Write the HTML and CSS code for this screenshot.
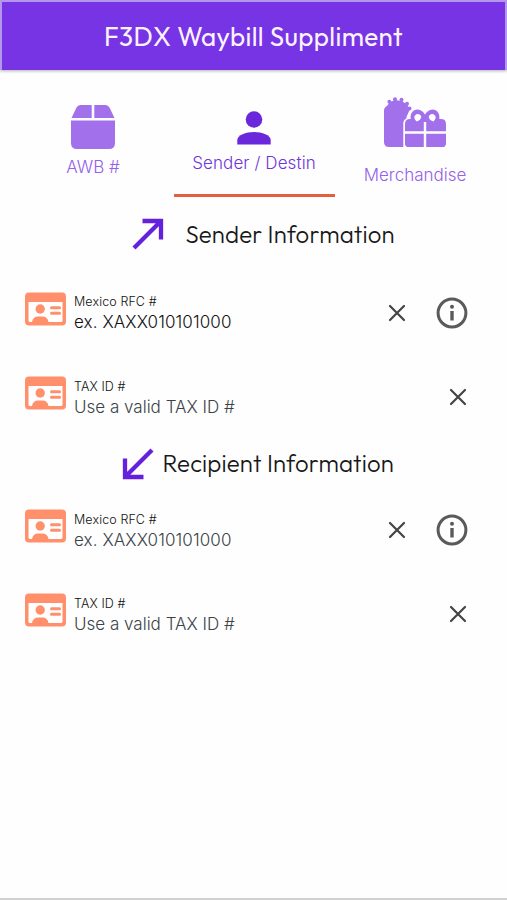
FILE: index.html
```html
<!DOCTYPE html>
<html lang="en">
<head>
<meta charset="utf-8">
<title>F3DX Waybill Suppliment</title>
<link rel="stylesheet" href="styles.css">
</head>
<body>
<svg class="defs" width="0" height="0">
  <symbol id="id-card" viewBox="0 0 42 34">
    <rect x="0.5" y="0.5" width="41" height="33" rx="4" fill="#ff906b"/>
    <path d="M4 10h34v18.500q0 1.500-1.500 1.500H24q-1-5.500-6-5.500h-4.500q-5 0-6 5.500H5.500Q4 30 4 28.500z" fill="#fff"/>
    <circle cx="15.700" cy="17" r="4.700" fill="#ff906b"/>
    <path d="M27 15.700h8M27 21.300h8" stroke="#ff906b" stroke-width="3" stroke-linecap="round"/>
  </symbol>
  <symbol id="close" viewBox="0 0 18 18">
    <path d="M2 2l14 14M16 2L2 16" stroke="#444" stroke-width="2.200" stroke-linecap="round"/>
  </symbol>
  <symbol id="info" viewBox="0 0 32 32">
    <circle cx="16" cy="16" r="13.900" fill="none" stroke="#5a5a5a" stroke-width="3"/>
    <path d="M16 14v9.500" stroke="#5a5a5a" stroke-width="3.400"/>
    <circle cx="16" cy="9.700" r="2" fill="#5a5a5a"/>
  </symbol>
</svg>
<main class="screen">
  <header class="bar"><h1>F3DX Waybill Suppliment</h1></header>
  <nav class="tabs">
    <a class="tab tab-awb">
      <svg width="44" height="44" viewBox="0 0 44 44" fill="#a370ec"><path d="M5.500 2.500Q6.700 0 9.500 0H20.700v13H0.500zM23.300 0h11.200q2.800 0 4 2.500L43.500 13H23.300zM0 15.500h44V38q0 6-6 6H6q-6 0-6-6z"/></svg>
      <span>AWB #</span>
    </a>
    <a class="tab tab-sender active">
      <svg width="34" height="34" viewBox="0 0 34 34" fill="#6a27db"><circle cx="17" cy="8.500" r="8.300"/><path d="M.3 33.500V29C.3 24 9 21 17 21s16.700 3 16.700 8v4.500z"/></svg>
      <span>Sender / Destin</span>
    </a>
    <a class="tab tab-merch">
      <svg width="64" height="52" viewBox="0 0 64 52" fill="#a370ec">
        <path d="M1 13.500Q1 10.500 4 9L7 5l5-2 7 1 5.500 4 2 5-3 7v30H6q-5 0-5-5z"/>
        <circle cx="6.400" cy="4.700" r="2"/><circle cx="12" cy="2.300" r="2"/><circle cx="18.500" cy="2.700" r="2"/><circle cx="24" cy="6.700" r="2"/><circle cx="26.500" cy="11.500" r="2"/>
        <path d="M20.300 52V26q0-4.500 6-5.200C26 14 32.500 9 38.500 12.500L42 16l3-3C51 9 57.500 13 58 20.800q6 1 6 6V52z" fill="#fff"/>
        <path d="M27 22h.7C26.500 15.500 32 10.500 37.500 13.300q3 1.500 4.500 4.200 1.500-2.700 4.500-4.200C52 10.500 57.500 15.500 56.300 22H58q5 0 5 5V50H22V27q0-5 5-5z"/>
        <path d="M32 22.500a3.500 3.500 0 1 1 6.300-2.500Q37.500 23.500 33.500 24.500zM52 22.500a3.500 3.500 0 1 0-6.300-2.500Q46.500 23.500 50.500 24.500z" fill="#fff"/>
        <path d="M42 25v26M21.500 35.500h42" stroke="#fff" stroke-width="2.400"/>
        <path d="M21 51v-6q1 5.500 6 5.500zM63.500 51v-6q-.5 5.500-5 5.500z" fill="#fff"/>
      </svg>
      <span>Merchandise</span>
    </a>
  </nav>

  <h2 class="section section-sender">
    <svg width="32" height="32" viewBox="0 0 32 32" fill="none" stroke="#6420dc" stroke-width="4.300"><path d="M10.500 3H29v18.500M28.500 3.500L2 30"/></svg>
    <span>Sender Information</span>
  </h2>
  <div class="row">
    <svg class="card"><use href="#id-card"/></svg>
    <div class="field"><label class="label rfc">Mexico RFC #</label><span class="value rfc-value filled">ex. XAXX010101000</span></div>
    <svg class="close"><use href="#close"/></svg>
    <svg class="info"><use href="#info"/></svg>
  </div>
  <div class="row lower">
    <svg class="card"><use href="#id-card"/></svg>
    <div class="field"><label class="label tax">TAX ID #</label><span class="value tax-value">Use a valid TAX ID #</span></div>
    <svg class="close last"><use href="#close"/></svg>
  </div>

  <h2 class="section section-recipient">
    <svg width="32" height="32" viewBox="0 0 32 32" fill="none" stroke="#6420dc" stroke-width="4.300"><path d="M21.500 29H3V10.500M3.500 28.500L30 2"/></svg>
    <span>Recipient Information</span>
  </h2>
  <div class="row lower">
    <svg class="card"><use href="#id-card"/></svg>
    <div class="field"><label class="label rfc">Mexico RFC #</label><span class="value rfc-value">ex. XAXX010101000</span></div>
    <svg class="close"><use href="#close"/></svg>
    <svg class="info"><use href="#info"/></svg>
  </div>
  <div class="row lower">
    <svg class="card"><use href="#id-card"/></svg>
    <div class="field"><label class="label tax">TAX ID #</label><span class="value tax-value">Use a valid TAX ID #</span></div>
    <svg class="close last"><use href="#close"/></svg>
  </div>
</main>
</body>
</html>
```
FILE: styles.css
```css
* { box-sizing: border-box; }
body { margin: 0; background: #fefefe; font-family: Inter, "Liberation Sans", sans-serif; font-weight: 300; }
.defs { display: block; }
.screen { height: 900px; border-bottom: 2px solid #d0d0d0; overflow: hidden; }
svg { flex: none; display: block; }

.bar {
  height: 70px;
  padding-top: 2px;
  border: 2px solid #b596ed;
  border-bottom: 0;
  background: #7734e4;
  box-shadow: 0 1px 3px rgba(0, 0, 0, .3);
  display: flex;
  align-items: center;
  justify-content: center;
}
.bar h1 { margin: 0; font: 400 26px/32px Outfit, Lato, sans-serif; letter-spacing: .37px; color: #fbf3ff; white-space: nowrap; }

.tabs { height: 127px; padding: 0 12.500px; display: grid; grid-template-columns: repeat(3, 161px); }
.tab { display: flex; flex-direction: column; align-items: center; color: #9560ea; font-size: 17px; line-height: 20px; white-space: nowrap; }
.tab-awb { padding-top: 35px; gap: 8px; }
.tab-sender { padding-top: 41px; gap: 8px; border-bottom: 3px solid #e65f3c; color: #6f34dc; }
.tab-merch { padding-top: 27px; gap: 16px; }
.tab-sender span { letter-spacing: .1px; }

.section { margin: 0; display: flex; align-items: center; font: 300 24px/30px Outfit, Lato, sans-serif; letter-spacing: .14px; color: #181818; white-space: nowrap; }
.section-sender { height: 74px; padding-left: 132px; gap: 21.500px; }
.section-recipient { height: 49px; padding-left: 122px; gap: 8.500px; }
.section-recipient span { margin-top: -2px; }

.row { height: 84px; padding: 0 39px 0 24px; display: flex; align-items: center; }
.card { width: 43px; height: 34px; margin-bottom: 9px; }
.field { flex: 1; margin-left: 7px; display: flex; flex-direction: column; white-space: nowrap; }
.lower .field { padding-top: 2px; }
.label { font-size: 12.500px; line-height: 18px; font-weight: 350; letter-spacing: .1px; color: #111; }
.value { font-size: 17px; line-height: 22px; color: #3b4347; }
.rfc-value { letter-spacing: .1px; }
.value.filled { color: #111; }
.close { width: 18px; height: 18px; margin-right: 30px; }
.close.last { margin-right: 1px; }
.info { width: 32px; height: 32px; }
```
